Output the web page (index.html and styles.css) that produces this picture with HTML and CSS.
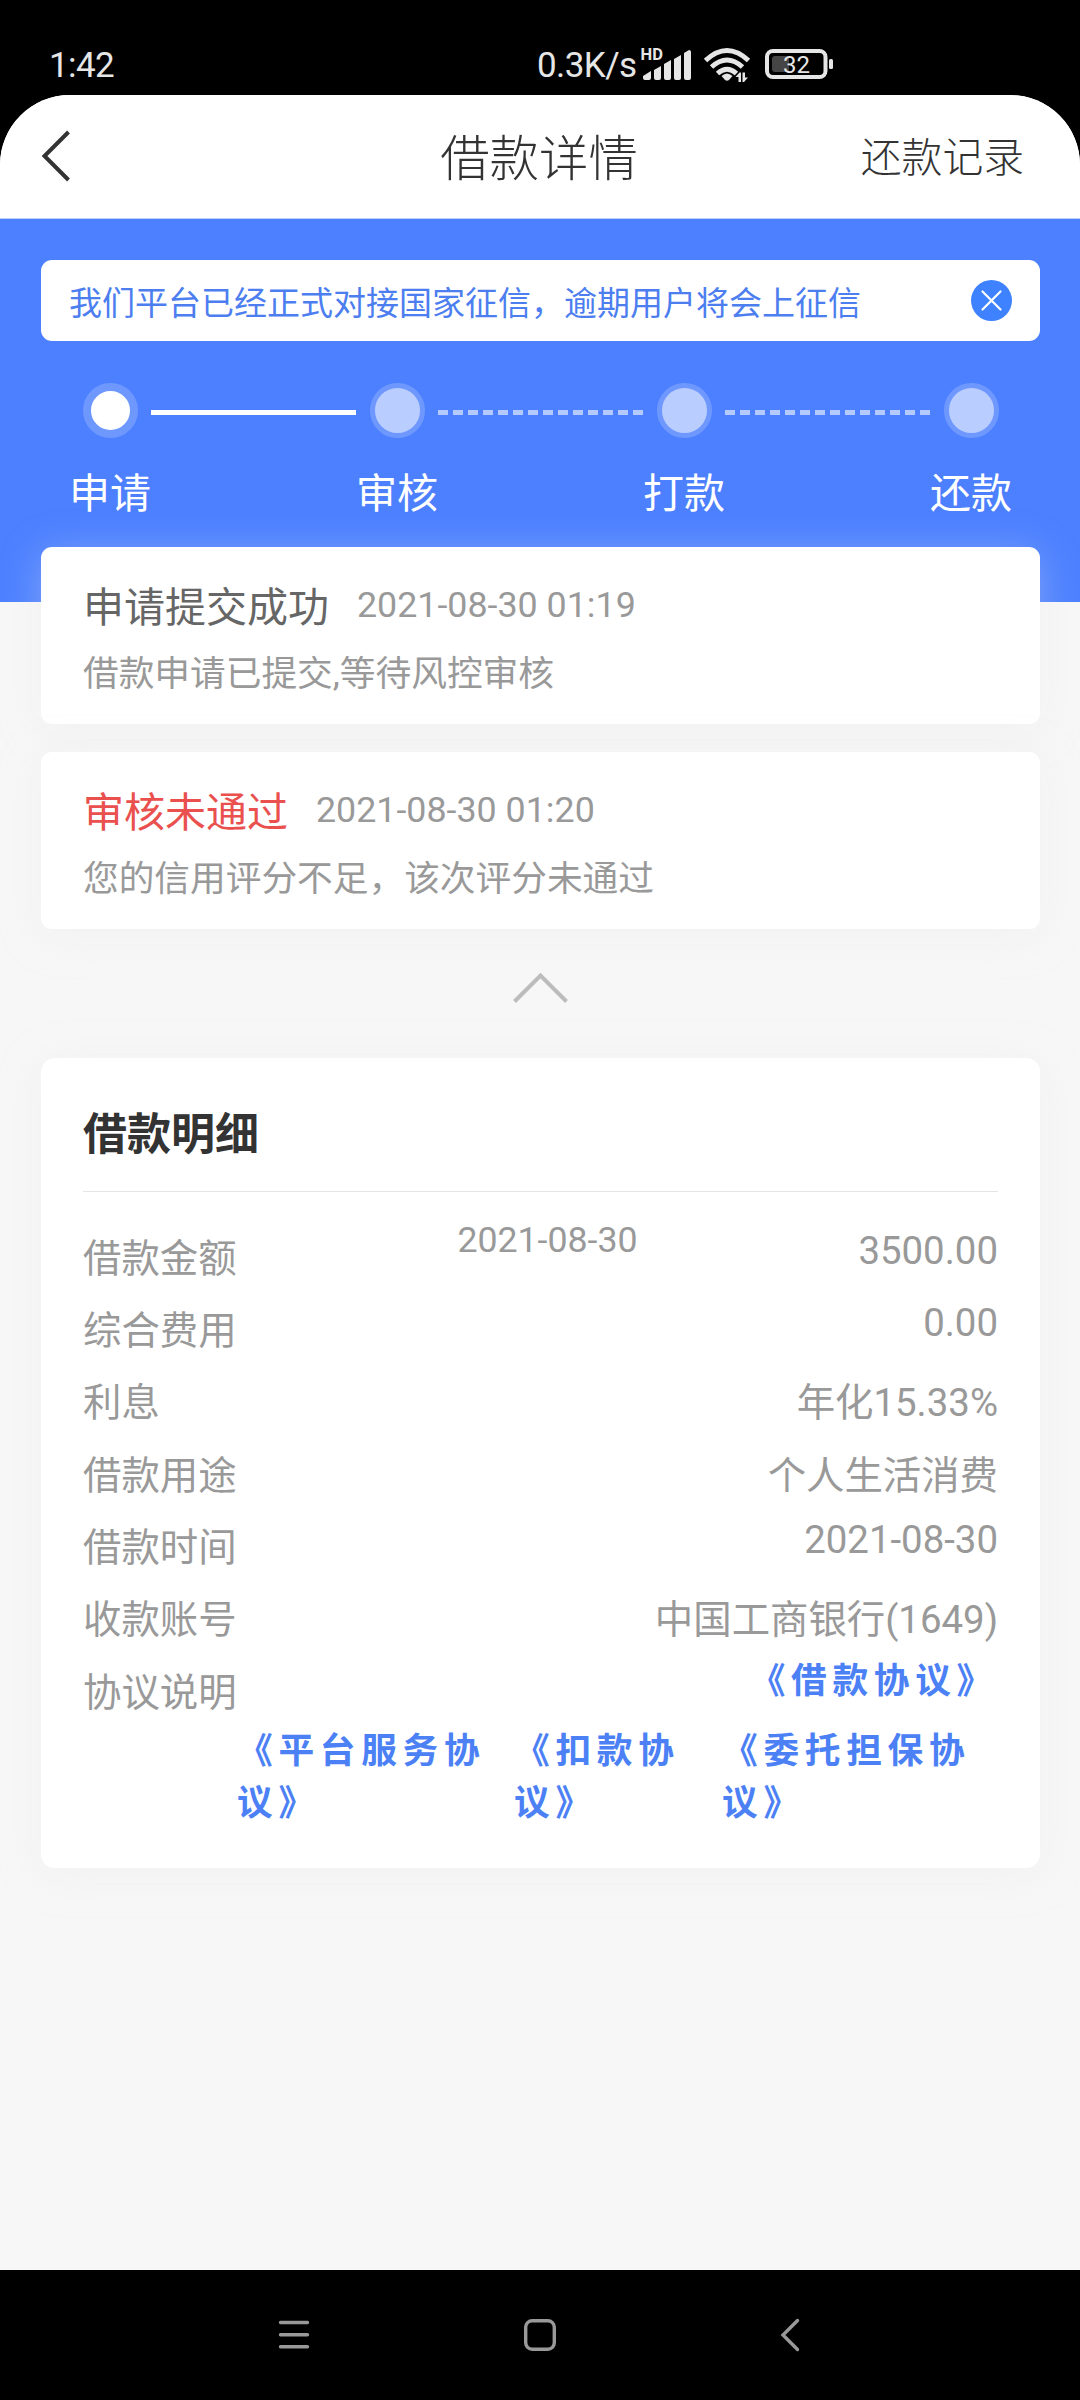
FILE: index.html
```html
<!DOCTYPE html>
<html lang="zh-CN">
<head>
<meta charset="utf-8">
<title>借款详情</title>
<link rel="stylesheet" href="styles.css">
</head>
<body>
<div class="screen">
  <div class="status">
    <span class="status-time">1:42</span>
    <div class="status-right">
      <span class="status-speed">0.3K/s</span>
      <svg class="status-icons" width="200" height="40" viewBox="640 45 200 40">
        <text x="640.5" y="60" class="hd">HD</text>
        <g fill="#e6e6e6">
          <path d="M643 76l8-5v7q0 2-2 2h-4q-2 0-2-2z"/>
          <path d="M654 70l7-4v12q0 2-2 2h-3q-2 0-2-2z"/>
          <path d="M664 64l7-4v18q0 2-2 2h-3q-2 0-2-2z"/>
          <path d="M674 59l7-4v23q0 2-2 2h-3q-2 0-2-2z"/>
          <path d="M684 53l5-3q2 0 2 2v26q0 2-2 2h-3q-2 0-2-2z"/>
          <path d="M721.500 76q5.500-5 11 0l-3.500 4q-2 1.500-4 0z"/>
          <path d="M735.500 77l4-4.500h1.500v9.500h-2.500v-5zM742.500 72.500h2.500v5h3l-4 4.500h-1.500z"/>
          <rect x="829" y="59" width="4" height="10" rx="1.500"/>
        </g>
        <g fill="none" stroke="#e6e6e6" stroke-width="5">
          <path d="M705.500 60.500q21.500-20 43 0"/>
          <path d="M711.500 67q15.500-14 31 0"/>
          <path d="M717.500 73.500q9.500-8.500 19 0"/>
        </g>
        <rect x="767" y="51" width="58.500" height="26" rx="6" fill="none" stroke="#e6e6e6" stroke-width="4"/>
        <rect x="772" y="56" width="17" height="16" rx="3" fill="#454545"/>
        <text x="783" y="73" class="battery">32</text>
      </svg>
    </div>
  </div>
  <div class="app">
    <header class="header">
      <svg width="34" height="56" viewBox="0 0 34 56" class="back"><path d="M30.500 5L6.500 29l24 24" fill="none" stroke="#333" stroke-width="4"/></svg>
      <h1 class="title">借款详情</h1>
      <span class="records">还款记录</span>
    </header>
    <section class="hero">
      <div class="notice">
        <span>我们平台已经正式对接国家征信，逾期用户将会上征信</span>
        <svg width="41" height="41" viewBox="0 0 41 41"><circle cx="20.500" cy="20.500" r="20.500" fill="#3f82ff"/><path d="M11.500 11.500l18 18m0-18l-18 18" stroke="#fff" stroke-width="2.200" stroke-linecap="round"/></svg>
      </div>
      <div class="steps">
        <div class="step step-done"><i class="dot"></i><span>申请</span></div>
        <i class="bar bar-done"></i>
        <div class="step"><i class="dot"></i><span>审核</span></div>
        <i class="bar"></i>
        <div class="step"><i class="dot"></i><span>打款</span></div>
        <i class="bar"></i>
        <div class="step"><i class="dot"></i><span>还款</span></div>
      </div>
    </section>
    <main class="content">
      <article class="card log">
        <div class="log-head"><h2>申请提交成功</h2><time>2021-08-30 01:19</time></div>
        <p>借款申请已提交,等待风控审核</p>
      </article>
      <article class="card log">
        <div class="log-head log-fail"><h2>审核未通过</h2><time>2021-08-30 01:20</time></div>
        <p>您的信用评分不足，该次评分未通过</p>
      </article>
      <svg class="fold" width="60" height="36" viewBox="0 0 60 36"><path d="M3.500 31.500L29.500 5.500l26 26" fill="none" stroke="#bcbcbc" stroke-width="4"/></svg>
      <section class="card detail">
        <h2 class="detail-title">借款明细</h2>
        <div class="rows">
          <div class="row"><span>借款金额</span><time class="row-date">2021-08-30</time><span class="num">3500.00</span></div>
          <div class="row"><span>综合费用</span><span class="num">0.00</span></div>
          <div class="row"><span>利息</span><span>年化15.33%</span></div>
          <div class="row"><span>借款用途</span><span>个人生活消费</span></div>
          <div class="row"><span>借款时间</span><span class="num">2021-08-30</span></div>
          <div class="row"><span>收款账号</span><span>中国工商银行(1649)</span></div>
          <div class="row row-last"><span>协议说明</span><a class="link link-first">《借款协议》</a></div>
        </div>
        <div class="links">
          <a class="link">《平台服务协<br>议》</a>
          <a class="link">《扣款协<br>议》</a>
          <a class="link">《委托担保协<br>议》</a>
        </div>
      </section>
    </main>
  </div>
  <nav class="nav">
    <svg width="40" height="40" viewBox="0 0 40 40"><path d="M6.500 7.500h27M6.500 19.700h27M6.500 31.700h27" stroke="#999" stroke-width="3.400" stroke-linecap="round"/></svg>
    <svg width="40" height="40" viewBox="0 0 40 40"><rect x="3.700" y="5.700" width="28.600" height="28.600" rx="6.500" fill="none" stroke="#999" stroke-width="3.400"/></svg>
    <svg width="40" height="40" viewBox="0 0 40 40"><path d="M27.500 5.500L13 20l14.500 14.500" fill="none" stroke="#999" stroke-width="3.400" stroke-linecap="round"/></svg>
  </nav>
</div>
</body>
</html>
```
FILE: styles.css
```css
* { box-sizing: border-box; margin: 0; padding: 0; }
body {
  font-family: Roboto, "Noto Sans CJK SC", sans-serif;
  background: #000;
  color: #999;
}
h1, h2 { font-weight: 400; }
i { display: block; }
svg { display: block; flex: none; }

.screen {
  width: 1080px;
  height: 2400px;
  display: flex;
  flex-direction: column;
  background: #000;
  overflow: hidden;
}

/* System status bar */
.status {
  height: 95px;
  padding: 36px 240px 0 49px;
  display: flex;
  justify-content: space-between;
  color: #e6e6e6;
  font-size: 35px;
  line-height: 60px;
}
.status-time { letter-spacing: -0.6px; }
.status-right { display: flex; }
.status-speed { width: 103px; letter-spacing: -0.6px; }
.status-icons { margin-top: 9px; }
.hd { font: 700 16.5px Roboto, sans-serif; fill: #e6e6e6; }
.battery { font: 400 24px Roboto, sans-serif; fill: #e6e6e6; }

.app {
  height: 2175px;
  background: #f7f7f7;
  border-radius: 70px 70px 0 0;
  overflow: hidden;
}

.header {
  height: 124px;
  padding: 0 56px 3px 38px;
  display: grid;
  grid-template-columns: 1fr auto 1fr;
  align-items: center;
  background: #fff;
  border-bottom: 1px solid #b9d2fb;
  color: #333;
}
.title {
  font-size: 49.4px;
  font-weight: 300;
  line-height: 60px;
  font-family: "Noto Sans CJK SC Light", "Noto Sans CJK SC", sans-serif;
  margin-right: -16px;
}
.records {
  justify-self: end;
  font-size: 40.8px;
  font-weight: 300;
  line-height: 60px;
  font-family: "Noto Sans CJK SC Light", "Noto Sans CJK SC", sans-serif;
}

.hero {
  height: 383px;
  padding: 41px 40px 0 41px;
  background: #4c80ff;
}
.notice {
  height: 81px;
  padding: 0 28px;
  display: flex;
  justify-content: space-between;
  align-items: center;
  background: #fff;
  border-radius: 11px;
  font-size: 33px;
  color: #4c7ef0;
}
.steps {
  padding: 42px 27px 0;
  display: flex;
  justify-content: space-between;
}
.step {
  width: 84px;
  display: flex;
  flex-direction: column;
  align-items: center;
  gap: 26px;
  font-size: 41px;
  line-height: 60px;
  color: #fff;
}
.dot {
  width: 55px;
  height: 55px;
  border-radius: 50%;
  border: 5px solid #6f98ff;
  background: #bacdff;
}
.step-done .dot { border-width: 8px; background: #fff; }
.bar {
  width: 205px;
  height: 5px;
  margin: 27px -3px 0;
  background: repeating-linear-gradient(90deg, #b4caff 0 10px, transparent 10px 15px);
}
.bar-done { background: #fff; }

.content {
  margin-top: -55px;
  padding: 0 40px 0 41px;
  display: flex;
  flex-direction: column;
}
.card {
  background: #fff;
  border-radius: 11px;
  box-shadow: 0 6px 40px rgba(232, 232, 232, 0.35);
}
.log {
  height: 177px;
  padding: 32px 42px 0;
  margin-bottom: 28px;
}
.log-head { display: flex; gap: 28px; color: #666; }
.log-head h2 { font-size: 41px; line-height: 59px; }
.log-fail h2 { color: #e9504e; }
.log-head time { font-size: 35.8px; line-height: 52px; color: #999; }
.log p { font-size: 35.7px; line-height: 52px; margin-top: 10px; }
.fold { align-self: center; margin: 13px 0 52px; }

.detail {
  height: 810px;
  padding: 0 42px;
  border-radius: 14px;
}
.detail-title {
  height: 134px;
  padding-top: 47px;
  border-bottom: 1px solid #e5e5e5;
  font-size: 44px;
  font-weight: 700;
  line-height: 60px;
  color: #333;
}
.rows { padding-top: 30.5px; }
.row {
  height: 72.4px;
  display: flex;
  justify-content: space-between;
  align-items: flex-start;
  font-size: 38.4px;
  line-height: 72.4px;
}
.num { line-height: 56px; }
.row-date { font-size: 35.7px; line-height: 34px; }
.row-last { height: 69.5px; }
.link {
  font-size: 35.7px;
  font-weight: 700;
  line-height: 51.5px;
  letter-spacing: 5.7px;
  color: #4c80f5;
}
.link-first { line-height: 49px; }
.links {
  padding-left: 154px;
  display: grid;
  grid-template-columns: 277px 208px 276px;
  white-space: nowrap;
}

.nav {
  height: 130px;
  padding: 0 270px 0 274px;
  display: flex;
  justify-content: space-between;
  align-items: center;
}
```
